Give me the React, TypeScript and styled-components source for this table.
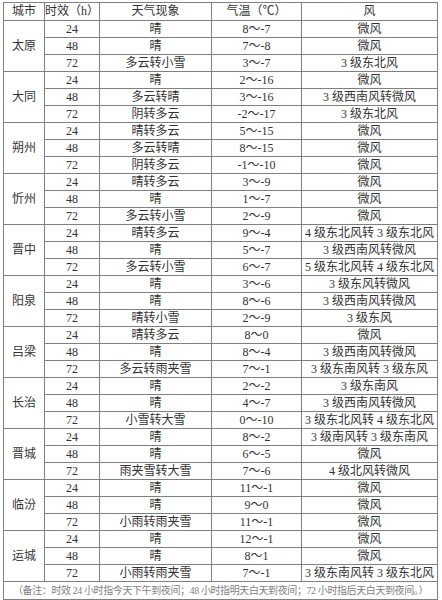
import styled, { createGlobalStyle } from 'styled-components';

const GlobalStyle = createGlobalStyle`
  html, body {
    margin: 0;
    padding: 0;
    background: #ffffff;
  }
`;

interface Forecast {
  hours: string;
  weather: string;
  temp: string;
  wind: string;
}

interface City {
  name: string;
  rows: Forecast[];
}

const f = (hours: string, weather: string, temp: string, wind: string): Forecast => ({
  hours,
  weather,
  temp,
  wind,
});

const cities: City[] = [
  {
    name: '太原',
    rows: [f('24', '晴', '8～-7', '微风'), f('48', '晴', '7～-8', '微风'), f('72', '多云转小雪', '3～-7', '3 级东北风')],
  },
  {
    name: '大同',
    rows: [
      f('24', '晴', '2～-16', '微风'),
      f('48', '多云转晴', '3～-16', '3 级西南风转微风'),
      f('72', '阴转多云', '-2～-17', '3 级东北风'),
    ],
  },
  {
    name: '朔州',
    rows: [f('24', '晴转多云', '5～-15', '微风'), f('48', '多云转晴', '8～-15', '微风'), f('72', '阴转多云', '-1～-10', '微风')],
  },
  {
    name: '忻州',
    rows: [f('24', '晴转多云', '3～-9', '微风'), f('48', '晴', '1～-7', '微风'), f('72', '多云转小雪', '2～-9', '微风')],
  },
  {
    name: '晋中',
    rows: [
      f('24', '晴转多云', '9～-4', '4 级东北风转 3 级东北风'),
      f('48', '晴', '5～-7', '3 级西南风转微风'),
      f('72', '多云转小雪', '6～-7', '5 级东北风转 4 级东北风'),
    ],
  },
  {
    name: '阳泉',
    rows: [
      f('24', '晴', '3～-6', '3 级东风转微风'),
      f('48', '晴', '8～-6', '3 级西南风转微风'),
      f('72', '晴转小雪', '2～-9', '3 级东风'),
    ],
  },
  {
    name: '吕梁',
    rows: [
      f('24', '晴转多云', '8～0', '微风'),
      f('48', '晴', '8～-4', '3 级西南风转微风'),
      f('72', '多云转雨夹雪', '7～-1', '3 级东南风转 3 级东风'),
    ],
  },
  {
    name: '长治',
    rows: [
      f('24', '晴', '2～-2', '3 级东南风'),
      f('48', '晴', '4～-7', '3 级西南风转微风'),
      f('72', '小雪转大雪', '0～-10', '3 级东北风转 4 级东北风'),
    ],
  },
  {
    name: '晋城',
    rows: [
      f('24', '晴', '8～-2', '3 级南风转 3 级东南风'),
      f('48', '晴', '6～-5', '微风'),
      f('72', '雨夹雪转大雪', '7～-6', '4 级北风转微风'),
    ],
  },
  {
    name: '临汾',
    rows: [f('24', '晴', '11～-1', '微风'), f('48', '晴', '9～0', '微风'), f('72', '小雨转雨夹雪', '11～-1', '微风')],
  },
  {
    name: '运城',
    rows: [
      f('24', '晴', '12～-1', '微风'),
      f('48', '晴', '8～1', '微风'),
      f('72', '小雨转雨夹雪', '7～-1', '3 级东南风转 3 级东北风'),
    ],
  },
];

export default function App() {
  return (
    <Page>
      <GlobalStyle />
      <Table>
        <colgroup>
          <col style={{ width: 41 }} />
          <col style={{ width: 55 }} />
          <col style={{ width: 112 }} />
          <col style={{ width: 90 }} />
          <col style={{ width: 136 }} />
        </colgroup>
        <thead>
          <tr>
            <HeadCell>城市</HeadCell>
            <HeadCell>时效（h）</HeadCell>
            <HeadCell>天气现象</HeadCell>
            <HeadCell>气温（℃）</HeadCell>
            <HeadCell>风</HeadCell>
          </tr>
        </thead>
        <tbody>
          {cities.map((city) =>
            city.rows.map((row, i) => (
              <tr key={city.name + row.hours}>
                {i === 0 && <CityCell rowSpan={3}>{city.name}</CityCell>}
                <Cell>{row.hours}</Cell>
                <Cell>{row.weather}</Cell>
                <Cell>{row.temp}</Cell>
                <Cell>{row.wind}</Cell>
              </tr>
            ))
          )}
          <tr>
            <NoteCell colSpan={5}>
              （备注：时效 24 小时指今天下午到夜间；48 小时指明天白天到夜间；72 小时指后天白天到夜间。）
            </NoteCell>
          </tr>
        </tbody>
      </Table>
    </Page>
  );
}

const Page = styled.div`
  padding: 2px 0 0 3px;
  font-family: 'Liberation Serif', 'Noto Sans CJK SC', serif;
  color: #333333;
`;

const Table = styled.table`
  width: 435px;
  table-layout: fixed;
  border-collapse: collapse;
  border: 1px solid #5f5f5f;
`;

const Cell = styled.td`
  height: 16px;
  padding: 0;
  border: 1px solid #808080;
  text-align: center;
  vertical-align: middle;
  font-size: 12px;
  line-height: 16px;
  white-space: nowrap;
  overflow: hidden;
`;

const HeadCell = styled.th`
  height: 17px;
  padding: 0;
  border: 1px solid #808080;
  text-align: center;
  font-weight: normal;
  font-size: 12px;
  line-height: 17px;
  white-space: nowrap;
`;

const CityCell = styled(Cell)`
  font-size: 12px;
`;

const NoteCell = styled(Cell)`
  height: 17px;
  font-size: 10px;
  color: #808080;
  letter-spacing: -0.4px;
`;
